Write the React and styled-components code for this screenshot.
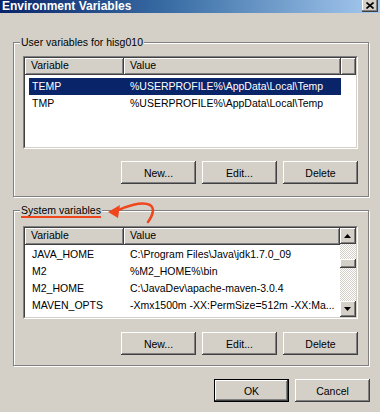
import React from "react";
import styled, { createGlobalStyle } from "styled-components";

const Global = createGlobalStyle`
  html, body { margin: 0; padding: 0; background: #d4d0c8; }
  body { font-family: "Liberation Sans", Arial, sans-serif; font-size: 10.5px; color: #000; }
`;

const Window = styled.div`
  width: 380px;
  height: 412px;
  overflow: hidden;
  background: #d4d0c8;
  display: flex;
  flex-direction: column;
`;

const TitleBar = styled.div`
  height: 13px;
  flex: none;
  display: flex;
  align-items: flex-start;
  justify-content: space-between;
  padding-left: 2px;
  background: linear-gradient(to right, #0a246a 0%, #3a6ea5 45%, #a6caf0 100%);
`;

const Title = styled.span`
  color: #fff;
  font-weight: bold;
  font-size: 12px;
  line-height: 13px;
`;

const CloseBtn = styled.div`
  width: 16px;
  height: 12px;
  margin-right: 2px;
  box-sizing: border-box;
  background: #d4d0c8;
  border-right: 1px solid #404040;
  border-bottom: 1px solid #404040;
  box-shadow: inset -1px -1px #808080, inset 1px 0 #fff;
  display: flex;
  align-items: center;
  justify-content: center;
`;

const Body = styled.div`
  flex: 1;
  display: flex;
  flex-direction: column;
  padding: 29px 11px 0 13px;
`;

const Group = styled.div`
  position: relative;
  box-sizing: border-box;
  height: ${(p) => p.$h}px;
  margin-bottom: 13px;
  border: 1px solid #808080;
  box-shadow: 1px 1px 0 #fff, inset 1px 1px 0 #fff;
  padding: ${(p) => p.$top}px 10px 0 9px;
  display: flex;
  flex-direction: column;
`;

const GroupLabel = styled.span`
  position: absolute;
  top: -7px;
  left: 6px;
  padding: 0 1px;
  line-height: 12px;
  background: #d4d0c8;
`;

const Marked = styled.span`
  text-decoration: underline;
  text-decoration-color: #f0461e;
  text-decoration-thickness: 2px;
  text-underline-offset: 2px;
`;

const Arrow = styled.svg`
  position: absolute;
  left: 92px;
  top: -12px;
`;

const ListFrame = styled.div`
  box-sizing: border-box;
  height: ${(p) => p.$h}px;
  flex: none;
  border: 1px solid;
  border-color: #808080 #fff #fff #808080;
  display: flex;
`;

const ListInner = styled.div`
  flex: 1;
  box-sizing: border-box;
  border: 1px solid;
  border-color: #404040 #d4d0c8 #d4d0c8 #404040;
  background: #fff;
  display: flex;
  overflow: hidden;
`;

const ListContent = styled.div`
  flex: 1;
  display: flex;
  flex-direction: column;
  min-width: 0;
`;

const Header = styled.div`
  display: flex;
  height: 17px;
  flex: none;
`;

const HeadCell = styled.div`
  box-sizing: border-box;
  width: ${(p) => (p.$w ? `${p.$w}px` : "auto")};
  flex: ${(p) => (p.$w ? "none" : "1")};
  background: #d4d0c8;
  border-right: 1px solid #404040;
  border-bottom: 1px solid #404040;
  box-shadow: inset 1px 1px #fff, inset -1px -1px #808080;
  padding-left: 6px;
  line-height: 15px;
  white-space: nowrap;
`;

const Rows = styled.div`
  padding: ${(p) => p.$top}px 0 0 4px;
`;

const Row = styled.div`
  display: grid;
  grid-template-columns: 98px 214px;
  width: 312px;
  height: 17px;
  line-height: 17px;
  background: ${(p) => (p.$sel ? "#0a246a" : "transparent")};
  color: ${(p) => (p.$sel ? "#fff" : "#000")};
`;

const Cell = styled.div`
  padding-left: 3px;
  white-space: nowrap;
  overflow: hidden;
`;

const ScrollBar = styled.div`
  width: 16px;
  flex: none;
  display: flex;
  flex-direction: column;
`;

const ScrollBtn = styled.div`
  width: 16px;
  height: 16px;
  flex: none;
  box-sizing: border-box;
  background: #d4d0c8;
  border-right: 1px solid #404040;
  border-bottom: 1px solid #404040;
  box-shadow: inset 1px 1px #fff, inset -1px -1px #808080;
  display: flex;
  align-items: center;
  justify-content: center;
`;

const Track = styled.div`
  flex: 1;
  background: repeating-conic-gradient(#ffffff 0 25%, #d4d0c8 0 50%) 0 0 / 2px 2px;
`;

const Thumb = styled.div`
  width: 16px;
  height: 9px;
  margin-top: 15px;
  box-sizing: border-box;
  background: #d4d0c8;
  border-right: 1px solid #404040;
  border-bottom: 1px solid #404040;
  box-shadow: inset 1px 1px #fff, inset -1px -1px #808080;
`;

const ButtonRow = styled.div`
  display: flex;
  justify-content: flex-end;
  gap: 6px;
  margin-top: ${(p) => p.$mt}px;
  margin-right: ${(p) => p.$mr || 0}px;
`;

const Btn = styled.button`
  width: 75px;
  height: 23px;
  box-sizing: border-box;
  padding: 0;
  margin: 0;
  font-family: "Liberation Sans", Arial, sans-serif;
  font-size: 10.5px;
  color: #000;
  background: #d4d0c8;
  border: ${(p) => (p.$default ? "1px solid #000" : "none")};
  box-shadow: inset -1px -1px #404040, inset 1px 1px #fff, inset -2px -2px #808080;
`;

const Tri = ({ down }) => (
  <svg width="7" height="4" viewBox="0 0 7 4">
    <polygon points={down ? "0,0 7,0 3.5,4" : "3.5,0 7,4 0,4"} fill="#000" />
  </svg>
);

const userVars = [
  ["TEMP", "%USERPROFILE%\\AppData\\Local\\Temp", true],
  ["TMP", "%USERPROFILE%\\AppData\\Local\\Temp", false],
];

const sysVars = [
  ["JAVA_HOME", "C:\\Program Files\\Java\\jdk1.7.0_09"],
  ["M2", "%M2_HOME%\\bin"],
  ["M2_HOME", "C:\\JavaDev\\apache-maven-3.0.4"],
  ["MAVEN_OPTS", "-Xmx1500m -XX:PermSize=512m -XX:Ma..."],
];

const ListHeader = ({ filler }) => (
  <Header>
    <HeadCell $w={99}>Variable</HeadCell>
    <HeadCell $w={filler ? 217 : undefined}>Value</HeadCell>
    {filler && <HeadCell />}
  </Header>
);

export default function App() {
  return (
    <>
      <Global />
      <Window>
        <TitleBar>
          <Title>Environment Variables</Title>
          <CloseBtn>
            <svg width="8" height="7" viewBox="0 0 8 7">
              <path d="M0.5 0.5 L7.5 6.5 M7.5 0.5 L0.5 6.5" stroke="#000" strokeWidth="1.6" />
            </svg>
          </CloseBtn>
        </TitleBar>
        <Body>
          <Group $h={155} $top={13}>
            <GroupLabel>User variables for hisg010</GroupLabel>
            <ListFrame $h={93}>
              <ListInner>
                <ListContent>
                  <ListHeader filler />
                  <Rows $top={3}>
                    {userVars.map(([k, v, sel]) => (
                      <Row key={k} $sel={sel}>
                        <Cell>{k}</Cell>
                        <Cell>{v}</Cell>
                      </Row>
                    ))}
                  </Rows>
                </ListContent>
              </ListInner>
            </ListFrame>
            <ButtonRow $mt={12}>
              <Btn>New...</Btn>
              <Btn>Edit...</Btn>
              <Btn>Delete</Btn>
            </ButtonRow>
          </Group>

          <Group $h={156} $top={15}>
            <GroupLabel>
              <Marked>System variables</Marked>
            </GroupLabel>
            <Arrow width="52" height="26" viewBox="0 0 52 26">
              <path
                d="M8 13 C 20 7, 36 2, 44 6 C 49 9, 47 16, 42 23"
                fill="none"
                stroke="#f0461e"
                strokeWidth="2.6"
                strokeLinecap="round"
              />
              <polygon points="2,13 14,6 12,19" fill="#f0461e" />
            </Arrow>
            <ListFrame $h={93}>
              <ListInner>
                <ListContent>
                  <ListHeader filler={false} />
                  <Rows $top={1}>
                    {sysVars.map(([k, v]) => (
                      <Row key={k}>
                        <Cell>{k}</Cell>
                        <Cell>{v}</Cell>
                      </Row>
                    ))}
                  </Rows>
                </ListContent>
                <ScrollBar>
                  <ScrollBtn>
                    <Tri />
                  </ScrollBtn>
                  <Track>
                    <Thumb />
                  </Track>
                  <ScrollBtn>
                    <Tri down />
                  </ScrollBtn>
                </ScrollBar>
              </ListInner>
            </ListFrame>
            <ButtonRow $mt={13}>
              <Btn>New...</Btn>
              <Btn>Edit...</Btn>
              <Btn>Delete</Btn>
            </ButtonRow>
          </Group>

          <ButtonRow $mt={0} $mr={-1}>
            <Btn $default>OK</Btn>
            <Btn>Cancel</Btn>
          </ButtonRow>
        </Body>
      </Window>
    </>
  );
}
